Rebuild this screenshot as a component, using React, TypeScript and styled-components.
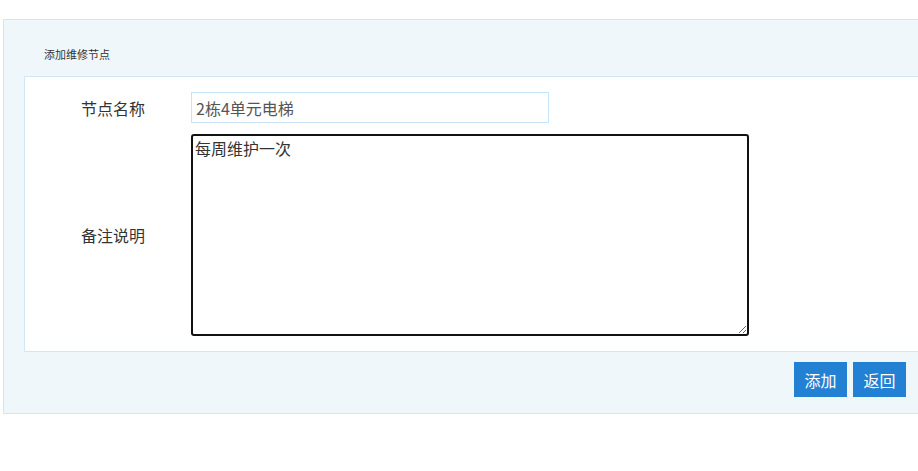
import styled, { createGlobalStyle } from 'styled-components';

const GlobalStyle = createGlobalStyle`
  html, body {
    margin: 0;
    padding: 0;
    background: #fff;
    overflow: hidden;
  }
  body {
    font-family: "Noto Sans CJK SC", "Noto Sans", sans-serif;
    color: #333;
  }
`;

const Panel = styled.div`
  margin: 19px -12px 0 3px;
  background-color: #eff7fb;
  border: 1px solid #d3e6f6;
`;

const PanelTitle = styled.div`
  height: 56px;
  box-sizing: border-box;
  padding: 26px 0 0 40px;
  font-size: 11px;
  line-height: 16px;
  color: #333;
`;

const FormBox = styled.div`
  margin: 0 -1px 0 20px;
  background-color: #fff;
  border: 1px solid #d3e6f6;
  padding: 15px 0 15px 0;
`;

const Row = styled.div<{ gap?: number }>`
  display: flex;
  align-items: center;
  margin-top: ${({ gap }) => gap ?? 0}px;
`;

const Label = styled.label`
  width: 166px;
  box-sizing: border-box;
  padding-left: 56px;
  font-size: 16px;
  color: #333;
  flex-shrink: 0;
`;

const TextInput = styled.input`
  width: 358px;
  height: 31px;
  box-sizing: border-box;
  border: 1px solid #c9e3f8;
  padding: 0 4px;
  font-family: "Noto Sans CJK SC", "Noto Sans", sans-serif;
  font-size: 16px;
  color: #555;
  outline: none;
`;

const TextArea = styled.textarea`
  width: 558px;
  height: 202px;
  box-sizing: border-box;
  border: 2px solid #111;
  border-radius: 3px;
  padding: 2px 2px;
  font-family: "Noto Sans CJK SC", "Noto Sans", sans-serif;
  font-size: 16px;
  line-height: 20px;
  color: #333;
  outline: none;
`;

const Footer = styled.div`
  display: flex;
  justify-content: flex-end;
  gap: 6px;
  padding: 10px 23px 16px 0;
`;

const Button = styled.button`
  width: 53px;
  height: 35px;
  border: none;
  background-color: #2381d3;
  color: #fff;
  font-family: "Noto Sans CJK SC", "Noto Sans", sans-serif;
  font-size: 16px;
  padding: 0;
  cursor: pointer;

  &:hover {
    background-color: #1c6fb8;
  }
`;

export default function App() {
  return (
    <>
      <GlobalStyle />
      <Panel>
        <PanelTitle>添加维修节点</PanelTitle>
        <FormBox>
          <Row>
            <Label>节点名称</Label>
            <TextInput defaultValue="2栋4单元电梯" />
          </Row>
          <Row gap={11}>
            <Label>备注说明</Label>
            <TextArea defaultValue="每周维护一次" />
          </Row>
        </FormBox>
        <Footer>
          <Button>添加</Button>
          <Button>返回</Button>
        </Footer>
      </Panel>
    </>
  );
}
